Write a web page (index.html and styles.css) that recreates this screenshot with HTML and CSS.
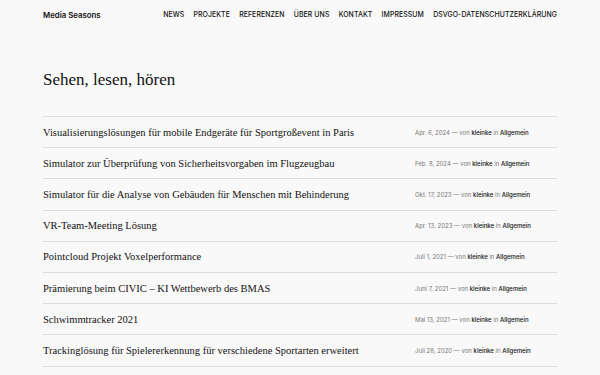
FILE: index.html
```html
<!DOCTYPE html>
<html lang="de">
<head>
<meta charset="utf-8">
<title>Media Seasons</title>
<link rel="stylesheet" href="styles.css">
</head>
<body>
<header class="site-header">
  <div class="brand">Media Seasons</div>
  <nav class="nav">
    <span>News</span><span>Projekte</span><span>Referenzen</span><span>Über uns</span><span>Kontakt</span><span>Impressum</span><span>DSVGO-Datenschutzerklärung</span>
  </nav>
</header>
<main class="main">
  <h1 class="page-title">Sehen, lesen, hören</h1>
  <ul class="posts">
    <li class="post"><span class="post-title">Visualisierungslösungen für mobile Endgeräte für Sportgroßevent in Paris</span><span class="meta">Apr. 6, 2024 — von <b>kleinke</b> in <b>Allgemein</b></span></li>
    <li class="post"><span class="post-title">Simulator zur Überprüfung von Sicherheitsvorgaben im Flugzeugbau</span><span class="meta">Feb. 8, 2024 — von <b>kleinke</b> in <b>Allgemein</b></span></li>
    <li class="post"><span class="post-title">Simulator für die Analyse von Gebäuden für Menschen mit Behinderung</span><span class="meta">Okt. 17, 2023 — von <b>kleinke</b> in <b>Allgemein</b></span></li>
    <li class="post"><span class="post-title">VR-Team-Meeting Lösung</span><span class="meta">Apr. 13, 2023 — von <b>kleinke</b> in <b>Allgemein</b></span></li>
    <li class="post"><span class="post-title">Pointcloud Projekt Voxelperformance</span><span class="meta">Juli 1, 2021 — von <b>kleinke</b> in <b>Allgemein</b></span></li>
    <li class="post"><span class="post-title">Prämierung beim CIVIC – KI Wettbewerb des BMAS</span><span class="meta">Juni 7, 2021 — von <b>kleinke</b> in <b>Allgemein</b></span></li>
    <li class="post"><span class="post-title">Schwimmtracker 2021</span><span class="meta">Mai 13, 2021 — von <b>kleinke</b> in <b>Allgemein</b></span></li>
    <li class="post"><span class="post-title">Trackinglösung für Spielererkennung für verschiedene Sportarten erweitert</span><span class="meta">Juli 28, 2020 — von <b>kleinke</b> in <b>Allgemein</b></span></li>
  </ul>
</main>
</body>
</html>
```
FILE: styles.css
```css
html, body {
  margin: 0;
  padding: 0;
  background: #f9f9f9;
  color: #111;
}
body {
  font-family: Inter, "Liberation Sans", sans-serif;
}
.site-header {
  display: flex;
  justify-content: space-between;
  align-items: center;
  padding: 8px 43px 0;
  height: 13px;
}
.brand {
  font-size: 7.8px;
  font-weight: 600;
  color: #111;
}
.nav {
  display: flex;
  gap: 9.2px;
}
.nav span {
  font-size: 6.9px;
  font-weight: 500;
  text-transform: uppercase;
  color: #111;
  letter-spacing: 0.1px;
}
.main {
  margin: 0 43px;
  padding-top: 47px;
}
.page-title {
  margin: 0 0 24px;
  font-family: "Liberation Serif", serif;
  font-weight: 400;
  font-size: 17px;
  line-height: 24px;
  color: #111;
}
.posts {
  list-style: none;
  margin: 0;
  padding: 0;
  border-top: 1px solid #dcdcdc;
}
.post {
  display: grid;
  grid-template-columns: 372px 1fr;
  align-items: center;
  height: 30.2px;
  border-bottom: 1px solid #dcdcdc;
}
.post-title {
  font-family: "Liberation Serif", serif;
  font-size: 10.5px;
  color: #111;
}
.meta {
  font-size: 6px;
  color: #777;
}
.meta b {
  font-weight: 500;
  color: #111;
}
```
